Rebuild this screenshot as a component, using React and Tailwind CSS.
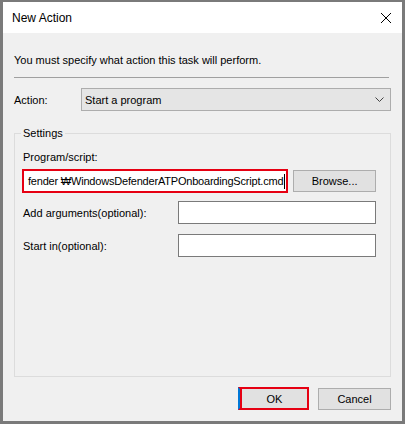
const font = { fontFamily: '"Liberation Sans", "Noto Sans CJK KR", sans-serif' };

const TextBox = ({ className = '' }) => (
    <div className={`h-[23px] bg-white border border-[#7a7a7a] ${className}`}></div>
);

const App = () => {
    return (
        <div
            className="w-[405px] h-[424px] bg-[#7a7a7a] pt-[2px] px-[3px] pb-[3px] text-[11px] leading-[16px] text-black"
            style={font}
        >
            <div className="h-full flex flex-col bg-[#f0f0f0]">
                {/* ======= TITLE BAR ======= */}
                <div className="h-[31px] bg-white flex items-center justify-between pl-[9px] pr-[10px]">
                    <span className="text-[12px]">New Action</span>
                    <svg width="12" height="12" viewBox="0 0 12 12" className="text-black">
                        <path d="M1 1 L11 11 M11 1 L1 11" stroke="currentColor" strokeWidth="1" fill="none" />
                    </svg>
                </div>

                {/* ======= BODY ======= */}
                <div className="flex-1 flex flex-col pl-[11px] pr-[11px] pt-[19px]">
                    <p>You must specify what action this task will perform.</p>
                    <div className="mt-[9px] mr-[2px] h-px bg-[#a0a0a0]"></div>

                    <div className="mt-[10px] flex items-center">
                        <span className="w-[67px]">Action:</span>
                        <div className="flex-1 h-[23px] bg-[#e5e5e5] border border-[#adadad] flex items-center justify-between pl-[3px] pr-[6px]">
                            <span>Start a program</span>
                            <svg width="9" height="5" viewBox="0 0 9 5">
                                <path d="M0.5 0.5 L4.5 4.5 L8.5 0.5" stroke="#444" strokeWidth="1" fill="none" />
                            </svg>
                        </div>
                    </div>

                    {/* ======= SETTINGS GROUP ======= */}
                    <div className="mt-[22px] h-[244px] border border-[#dcdcdc] pl-[7px] pr-[14px] flex flex-col">
                        <span className="-mt-[9px] -ml-px w-fit px-[2px] bg-[#f0f0f0]">Settings</span>
                        <p className="mt-[8px] pl-px">Program/script:</p>
                        <div className="mt-[4px] flex items-start">
                            <div className="w-[267px] h-[24px] border-2 border-[#e60012] bg-white flex items-center pl-[4px] overflow-hidden whitespace-nowrap">
                                <span className="tracking-[-0.2px]">fender ₩WindowsDefenderATPOnboardingScript.cmd</span>
                                <span className="ml-px w-px h-[15px] shrink-0 bg-black"></span>
                            </div>
                            <button className="ml-[5px] mt-px w-[83px] h-[22px] bg-[#e1e1e1] border border-[#adadad]">
                                Browse...
                            </button>
                        </div>
                        <div className="mt-[8px] flex items-center">
                            <span className="w-[156px] pl-px">Add arguments(optional):</span>
                            <TextBox className="w-[198px]" />
                        </div>
                        <div className="mt-[10px] flex items-center">
                            <span className="w-[156px] pl-px">Start in(optional):</span>
                            <TextBox className="w-[198px]" />
                        </div>
                    </div>

                    {/* ======= BUTTONS ======= */}
                    <div className="mt-[10px] flex justify-end items-start">
                        <div className="w-[71px] h-[23px] border-2 border-[#e60012] bg-[#e1e1e1] border-l-[#0078d7]">
                            <div className="w-full h-full border-l-2 border-[#e60012] flex items-center justify-center">OK</div>
                        </div>
                        <button className="ml-[9px] mt-px w-[73px] h-[22px] bg-[#e1e1e1] border border-[#adadad]">
                            Cancel
                        </button>
                    </div>
                </div>
            </div>
        </div>
    );
};

export default App;
